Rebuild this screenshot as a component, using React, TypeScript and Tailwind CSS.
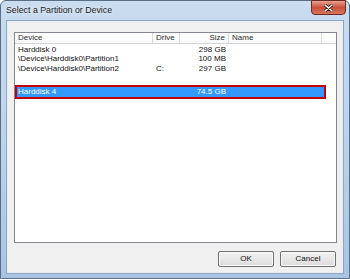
import React from 'react';

interface Row {
  device: string;
  drive: string;
  size: string;
}

const rows: Row[] = [
  { device: 'Harddisk 0', drive: '', size: '298 GB' },
  { device: '\\Device\\Harddisk0\\Partition1', drive: '', size: '100 MB' },
  { device: '\\Device\\Harddisk0\\Partition2', drive: 'C:', size: '297 GB' },
];

const font = { fontFamily: '"Liberation Sans", Arial, sans-serif' };

const App: React.FC = () => {
  return (
    <div
      className="w-[350px] h-[279px] flex flex-col rounded-t-[6px] border border-[#5a6f86] bg-gradient-to-b from-[#c9dcf0] via-[#bdd3ea] to-[#a9c4e2] text-[#1a1a1a]"
      style={font}
    >
      {/* Title bar */}
      <div className="h-[20px] flex items-start justify-between shrink-0">
        <span className="pl-[5px] pt-[4px] text-[8.8px] leading-[11px] text-[#1b1b1b] [text-shadow:0_0_4px_#ffffff]">
          Select a Partition or Device
        </span>
        <div className="mr-[3px] mt-[-1px] w-[35px] h-[15px] rounded-b-[4px] border border-[#6b2a22] bg-gradient-to-b from-[#e8a090] via-[#c9503c] to-[#d9745a] flex items-center justify-center">
          <svg width="9" height="8" viewBox="0 0 9 8">
            <path d="M1 1 L8 7 M8 1 L1 7" stroke="#3a1a14" strokeWidth="3" strokeLinecap="round" />
            <path d="M1 1 L8 7 M8 1 L1 7" stroke="#ffffff" strokeWidth="1.6" strokeLinecap="round" />
          </svg>
        </div>
      </div>

      {/* Client area */}
      <div className="mx-[6px] mb-[5px] flex-1 flex flex-col bg-[#f0f0f0] border border-[#e8eef6] shadow-[0_0_0_1px_#8ea6c0]">
        {/* List view */}
        <div className="mt-[10px] ml-[6px] mr-[5px] h-[211px] bg-white border border-[#828790] flex flex-col text-[8px]">
          {/* Header */}
          <div className="h-[11px] flex border-b border-[#d5d5d5] bg-gradient-to-b from-white to-[#f6f7f9] text-[#2e2e2e] leading-[10px] shrink-0">
            <div className="w-[138px] pl-[3px] border-r border-[#dadada]">Device</div>
            <div className="w-[27px] pl-[3px] border-r border-[#dadada]">Drive</div>
            <div className="w-[49px] pr-[3px] text-right border-r border-[#dadada]">Size</div>
            <div className="w-[93px] pl-[3px] border-r border-[#dadada]">Name</div>
            <div className="flex-1" />
          </div>

          {/* Rows */}
          <div className="flex flex-col pt-[0.5px]">
            {rows.map((r) => (
              <div key={r.device} className="h-[9.5px] flex leading-[9.5px] text-[#111]">
                <div className="w-[138px] pl-[3px] whitespace-nowrap">{r.device}</div>
                <div className="w-[27px] pl-[3px]">{r.drive}</div>
                <div className="w-[49px] pr-[3px] text-right">{r.size}</div>
              </div>
            ))}
          </div>

          {/* Selected row */}
          <div className="mt-[12px] w-[311px] h-[14px] border-2 border-[#c40000] bg-[#3399ff] flex items-center text-white leading-[10px]">
            <div className="w-[136px] pl-[1px]">Harddisk 4</div>
            <div className="w-[27px]" />
            <div className="w-[49px] pr-[3px] text-right">74.5 GB</div>
          </div>
        </div>

        {/* Buttons */}
        <div className="mt-[8px] mr-[6px] flex justify-end gap-[6px] text-[8px]">
          <button className="w-[56px] h-[16px] rounded-[2px] border border-[#707070] bg-gradient-to-b from-[#f2f2f2] to-[#dcdcdc] shadow-[inset_0_0_0_1px_#fcfcfc] text-[#111] leading-[14px]">
            OK
          </button>
          <button className="w-[56px] h-[16px] rounded-[2px] border border-[#707070] bg-gradient-to-b from-[#f2f2f2] to-[#dcdcdc] shadow-[inset_0_0_0_1px_#fcfcfc] text-[#111] leading-[14px]">
            Cancel
          </button>
        </div>
      </div>
    </div>
  );
};

export default App;
